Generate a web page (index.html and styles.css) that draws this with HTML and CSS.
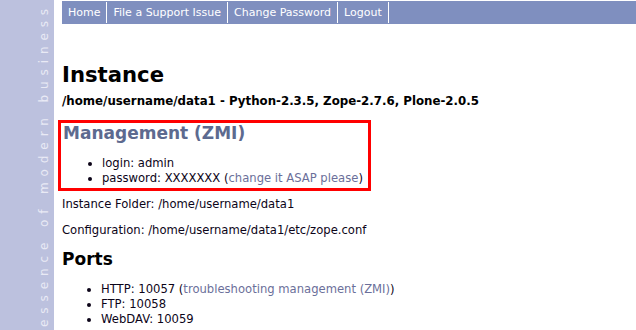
FILE: index.html
```html
<!DOCTYPE html>
<html lang="en">
<head>
  <meta charset="UTF-8" />
  <title>Instance</title>
  <link rel="stylesheet" href="styles.css">
</head>
<body>

  <div class="page">
    <div class="sidebar">
      <span class="tagline">essence of modern business</span>
    </div>

    <div class="main">
      <div class="nav">
        <a href="#">Home</a>
        <a href="#">File a Support Issue</a>
        <a href="#">Change Password</a>
        <a href="#">Logout</a>
      </div>

      <h1>Instance</h1>
      <h3>/home/username/data1 - Python-2.3.5, Zope-2.7.6, Plone-2.0.5</h3>

      <div class="zmi">
        <h2>Management (ZMI)</h2>
        <ul>
          <li>login: admin</li>
          <li>password: XXXXXXX (<a href="#">change it ASAP please</a>)</li>
        </ul>
      </div>

      <p>Instance Folder: /home/username/data1</p>
      <p>Configuration: /home/username/data1/etc/zope.conf</p>

      <h2 class="ports">Ports</h2>
      <ul>
        <li>HTTP: 10057 (<a href="#">troubleshooting management (ZMI)</a>)</li>
        <li>FTP: 10058</li>
        <li>WebDAV: 10059</li>
      </ul>
    </div>
  </div>

</body>
</html>
```

FILE: styles.css
```css
body {
  margin: 0;
  background: #fff;
  color: #0c0418;
  font-family: 'DejaVu Sans', Verdana, sans-serif;
  font-size: 11.6px;
}

.page {
  display: flex;
  height: 330px;
  overflow: hidden;
}

.sidebar {
  width: 54px;
  flex-shrink: 0;
  background: #bcc1de;
  display: flex;
  justify-content: flex-end;
  align-items: flex-end;
  padding-right: 3px;
  box-sizing: border-box;
}

.tagline {
  writing-mode: vertical-rl;
  transform: rotate(180deg);
  color: #e9eaf5;
  font-size: 12px;
  letter-spacing: 5.9px;
  white-space: nowrap;
  padding-top: 3px;
}

.main {
  flex: 1;
  padding-left: 8px;
  padding-top: 1px;
}

.nav {
  display: flex;
  background: #7f8fbf;
  height: 23px;
  align-items: stretch;
}

.nav a {
  color: #fff;
  text-decoration: none;
  font-size: 11px;
  padding: 0 6px;
  margin: 1px 0;
  line-height: 21px;
  border-right: 1px solid #fff;
}

h1 {
  font-size: 21.2px;
  color: #000;
  margin: 38px 0 7px;
}

h3 {
  font-size: 11.8px;
  color: #000;
  margin: 0 0 12px;
}

h2 {
  font-size: 17px;
  color: #5d6a8f;
  margin: 0;
}

.zmi {
  border: 3px solid #f00;
  margin-left: -4px;
  width: 305px;
  padding: 0 0 2px 2px;
}

ul {
  margin: 13px 0 0;
  padding-left: 39px;
  list-style: disc;
}

.zmi ul {
  margin-top: 13px;
}

li {
  line-height: 15px;
}

a {
  color: #6b6f9a;
  text-decoration: none;
}

p {
  margin: 6px 0 11px;
  line-height: 15px;
}

.ports {
  color: #000;
  margin-top: 6px;
}
```
